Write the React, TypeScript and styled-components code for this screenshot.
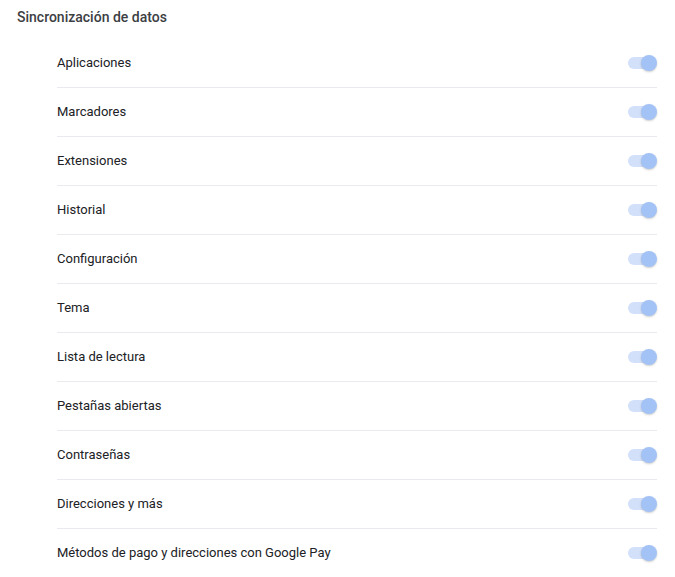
import React from "react";
import styled, { createGlobalStyle } from "styled-components";

const GlobalStyle = createGlobalStyle`
  body {
    margin: 0;
    background: #ffffff;
    font-family: Roboto, "Liberation Sans", sans-serif;
  }
`;

const Page = styled.div`
  padding: 7px 18px 0 17px;
`;

const Title = styled.h2`
  margin: 0;
  font-size: 14px;
  line-height: 20px;
  font-weight: 500;
  color: #3c4043;
`;

const List = styled.div`
  margin: 12px 0 0 40px;
  width: 600px;
`;

const Row = styled.div`
  display: flex;
  align-items: center;
  justify-content: space-between;
  height: 47px;
  padding-bottom: 1px;
  border-top: 1px solid #e8eaed;

  &:first-child {
    border-top: none;
  }
`;

const Label = styled.span`
  font-size: 13px;
  color: #202124;
`;

const Track = styled.span<{ $on: boolean }>`
  position: relative;
  display: inline-block;
  width: 28px;
  height: 12px;
  margin-right: 1px;
  border-radius: 6px;
  background: ${(p) => (p.$on ? "#d2e0fa" : "#dadce0")};
`;

const Knob = styled.span<{ $on: boolean }>`
  position: absolute;
  top: -2px;
  left: ${(p) => (p.$on ? "13px" : "-1px")};
  width: 16px;
  height: 16px;
  border-radius: 50%;
  background: ${(p) => (p.$on ? "#a3c2f5" : "#f1f3f4")};
  box-shadow: 0 1px 2px rgba(60, 64, 67, 0.25);
`;

const items = [
  "Aplicaciones",
  "Marcadores",
  "Extensiones",
  "Historial",
  "Configuración",
  "Tema",
  "Lista de lectura",
  "Pestañas abiertas",
  "Contraseñas",
  "Direcciones y más",
  "Métodos de pago y direcciones con Google Pay",
];

function Toggle({ on }: { on: boolean }) {
  return (
    <Track $on={on} role="switch" aria-checked={on} aria-disabled>
      <Knob $on={on} />
    </Track>
  );
}

export default function App() {
  return (
    <>
      <GlobalStyle />
      <Page>
        <Title>Sincronización de datos</Title>
        <List>
          {items.map((label) => (
            <Row key={label}>
              <Label>{label}</Label>
              <Toggle on />
            </Row>
          ))}
        </List>
      </Page>
    </>
  );
}
